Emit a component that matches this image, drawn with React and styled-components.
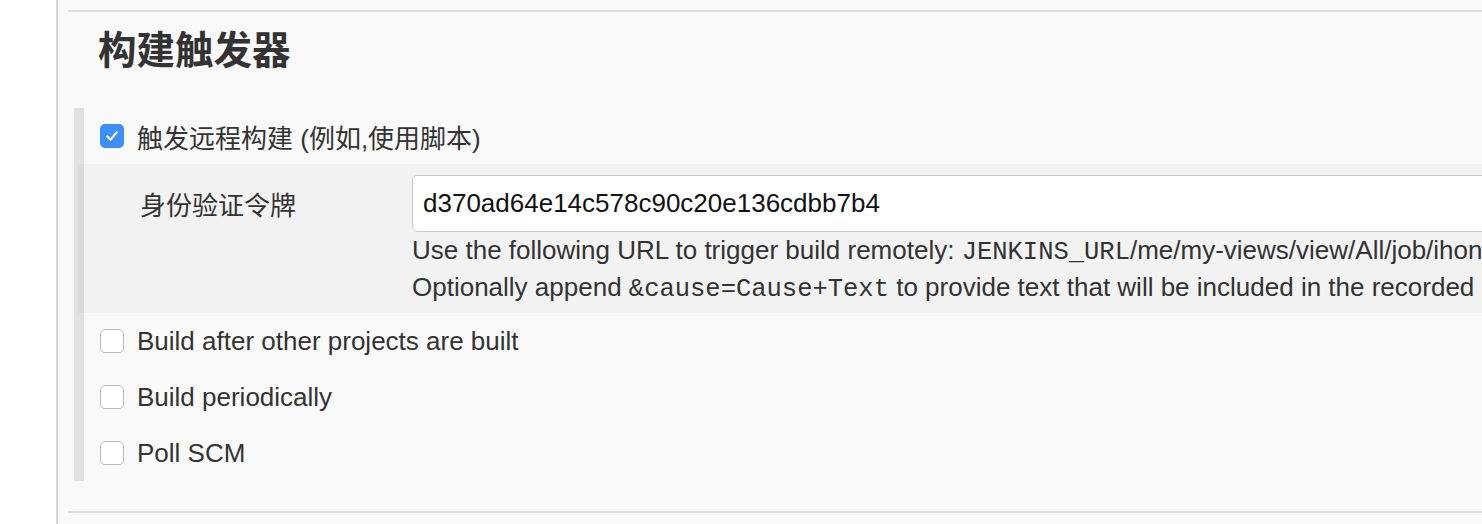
import styled, { createGlobalStyle } from 'styled-components'

const GlobalStyle = createGlobalStyle`
	html, body {
		margin: 0;
		padding: 0;
		background: #fff;
		overflow: hidden;
	}
	body {
		font-family: 'Liberation Sans', Arial, 'Noto Sans CJK SC', sans-serif;
		color: #333;
	}
`

const Page = styled.div`
	display: flex;
	width: 1800px;
	height: 524px;
`

const Gutter = styled.div`
	width: 56px;
	flex-shrink: 0;
	background: #fff;
`

const Panel = styled.div`
	flex: 1;
	background: #f9f9f9;
	border-left: 2px solid #d6d6d6;
	padding: 10px 0 0 10px;
`

const Rule = styled.div`
	border-top: 2px solid #dddddd;
`

const Title = styled.h2`
	margin: 0;
	padding: 16px 0 0 30px;
	height: 81px;
	box-sizing: border-box;
	font-size: 38.5px;
	font-weight: bold;
	line-height: 46px;
	color: #333;
	font-family: 'Liberation Sans', 'Noto Sans CJK SC', sans-serif;
`

const Section = styled.div`
	margin: 15px 0 30px 6px;
	border-left: 10px solid #e1e1e1;
	display: flex;
	flex-direction: column;
`

const Row = styled.label`
	display: flex;
	align-items: center;
	gap: 13px;
	height: 56px;
	padding-left: 16px;
	font-size: 26px;
	color: #333;
	font-family: 'Liberation Sans', 'Noto Sans CJK SC', sans-serif;
`

const Box = styled.span`
	width: 24px;
	height: 24px;
	box-sizing: border-box;
	border-radius: 5px;
	display: flex;
	align-items: center;
	justify-content: center;
	flex-shrink: 0;
	background: ${(props) => (props.checked ? '#3c8ff6' : '#fff')};
	border: ${(props) => (props.checked ? 'none' : '1px solid #b9b9b9')};
`

const Nested = styled.div`
	margin-left: -6px;
	border-left: 6px solid #d9d9d9;
	background: #f2f2f2;
	display: grid;
	grid-template-columns: 272px 1fr;
	height: 149px;
	box-sizing: border-box;
	padding: 11px 0 0 56px;
`

const FieldLabel = styled.div`
	height: 57px;
	display: flex;
	align-items: center;
	font-size: 26px;
	color: #333;
	font-family: 'Liberation Sans', 'Noto Sans CJK SC', sans-serif;
`

const Field = styled.div`
	display: flex;
	flex-direction: column;
`

const TokenInput = styled.input`
	height: 57px;
	box-sizing: border-box;
	border: 1px solid #c9c9c9;
	border-radius: 5px;
	background: #fff;
	padding: 0 10px;
	font-size: 26px;
	font-family: 'Liberation Sans', Arial, sans-serif;
	color: #111;
	outline: none;
`

const Help = styled.div`
	height: 37px;
	font-size: 26px;
	line-height: 37px;
	color: #333;
	white-space: nowrap;
	overflow: hidden;
`

const Code = styled.code`
	font-family: 'Liberation Mono', 'Courier New', monospace;
	font-size: 25.5px;
	line-height: 0;
`

function Check({ checked }) {
	return (
		<Box checked={checked}>
			{checked && (
				<svg width="16" height="16" viewBox="0 0 16 16">
					<path
						d="M3.2 8.4 L6.6 11.6 L12.8 4.4"
						fill="none"
						stroke="#fff"
						strokeWidth="2.2"
						strokeLinecap="round"
						strokeLinejoin="round"
					/>
				</svg>
			)}
		</Box>
	)
}

const options = ['Build after other projects are built', 'Build periodically', 'Poll SCM']

export default function App() {
	return (
		<>
			<GlobalStyle />
			<Page>
				<Gutter />
				<Panel>
					<Rule />
					<Title>构建触发器</Title>
					<Section>
						<Row>
							<Check checked />
							触发远程构建 (例如,使用脚本)
						</Row>
						<Nested>
							<FieldLabel>身份验证令牌</FieldLabel>
							<Field>
								<TokenInput defaultValue="d370ad64e14c578c90c20e136cdbb7b4" />
								<Help>
									Use the following URL to trigger build remotely: <Code>JENKINS_URL</Code>
									/me/my-views/view/All/job/ihon
								</Help>
								<Help>
									Optionally append <Code>&amp;cause=Cause+Text</Code> to provide text that will be
									included in the recorded
								</Help>
							</Field>
						</Nested>
						{options.map((label) => (
							<Row key={label}>
								<Check />
								{label}
							</Row>
						))}
					</Section>
					<Rule />
				</Panel>
			</Page>
		</>
	)
}
